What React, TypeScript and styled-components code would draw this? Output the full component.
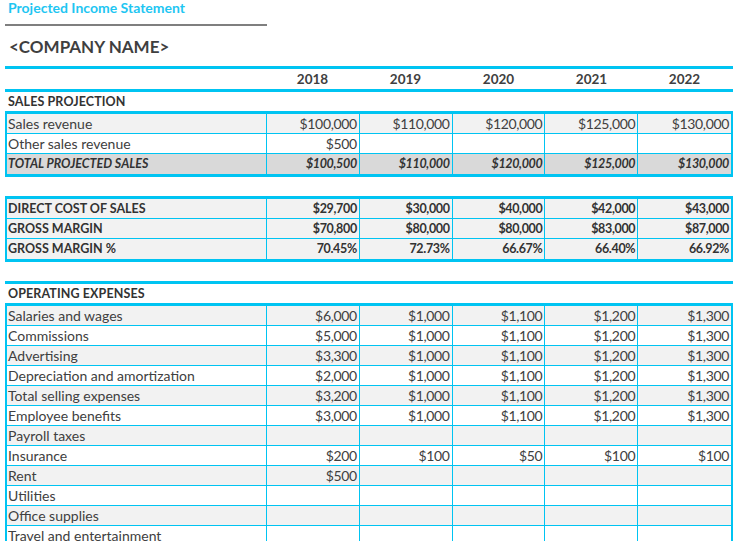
import React from "react";
import styled, { createGlobalStyle, css } from "styled-components";

const CYAN = "#00C4F2";
const TEXT = "#404040";
const FONT = `"Lato", "Open Sans", "Liberation Sans", sans-serif`;

const GlobalStyle = createGlobalStyle`
  html, body { margin: 0; padding: 0; background: #ffffff; }
  body { font-family: ${FONT}; color: ${TEXT}; }
`;

const Page = styled.div`
  width: 728px;
  padding-left: 5px;
  display: flex;
  flex-direction: column;
`;

const Title = styled.div`
  height: 24px;
  padding-left: 3px;
  font-size: 14px;
  font-weight: 700;
  color: #1ec6f2;
  line-height: 16px;
`;

const GrayRule = styled.div`
  width: 262px;
  height: 2px;
  background: #7f7f7f;
`;

const Company = styled.div`
  height: 40px;
  display: flex;
  align-items: center;
  padding-left: 4px;
  font-size: 17px;
  font-weight: 700;
  color: #3f3f3f;
`;

const CyanRule = styled.div`
  height: 3px;
  background: ${CYAN};
`;

const cols = css`
  display: grid;
  grid-template-columns: 261px repeat(5, 1fr);
  padding: 0 2px 0 0;
`;

const YearRow = styled.div`
  ${cols};
  height: 20px;
  align-items: center;
  font-size: 13.5px;
  font-weight: 700;
  color: ${TEXT};
`;

const YearCell = styled.div`
  text-align: center;
`;

const SectionLabel = styled.div`
  height: 19px;
  display: flex;
  align-items: center;
  padding-left: 3px;
  font-size: 12.5px;
  font-weight: 700;
  color: #333333;
  letter-spacing: 0.1px;
`;

const Gap = styled.div`
  height: 19px;
`;

const Table = styled.div`
  border-top: 3px solid ${CYAN};
  border-bottom: 3px solid ${CYAN};
  border-left: 2px solid ${CYAN};
  border-right: 2px solid ${CYAN};
  display: flex;
  flex-direction: column;
`;

type Tone = "light" | "white" | "total";

const Row = styled.div<{ $tone: Tone; $bold?: boolean; $italic?: boolean }>`
  display: grid;
  grid-template-columns: 260px repeat(5, 1fr);
  height: 20px;
  box-sizing: border-box;
  background: ${(p) =>
    p.$tone === "light" ? "#F2F2F2" : p.$tone === "total" ? "#D9D9D9" : "#FFFFFF"};
  font-weight: ${(p) => (p.$bold ? 700 : 400)};
  font-style: ${(p) => (p.$italic ? "italic" : "normal")};
  font-size: ${(p) => (p.$bold ? "12.5px" : "14px")};
  color: ${(p) => (p.$bold ? "#333333" : TEXT)};
  &:not(:last-child) {
    border-bottom: 1px solid ${CYAN};
  }
`;

const Cell = styled.div<{ $align?: "left" | "right" }>`
  display: flex;
  align-items: center;
  justify-content: ${(p) => (p.$align === "right" ? "flex-end" : "flex-start")};
  padding: ${(p) => (p.$align === "right" ? "0 2px 1px 0" : "0 0 1px 1px")};
  letter-spacing: ${(p) => (p.$align === "right" ? "-0.35px" : "0")};
  white-space: nowrap;
  overflow: hidden;
  &:not(:last-child) {
    border-right: 1px solid ${CYAN};
  }
`;

type Line = { label: string; values: string[]; tone: Tone; bold?: boolean; italic?: boolean };

const years = ["2018", "2019", "2020", "2021", "2022"];

const sales: Line[] = [
  { label: "Sales revenue", values: ["$100,000", "$110,000", "$120,000", "$125,000", "$130,000"], tone: "light" },
  { label: "Other sales revenue", values: ["$500", "", "", "", ""], tone: "white" },
  {
    label: "TOTAL PROJECTED SALES",
    values: ["$100,500", "$110,000", "$120,000", "$125,000", "$130,000"],
    tone: "total",
    bold: true,
    italic: true,
  },
];

const margins: Line[] = [
  { label: "DIRECT COST OF SALES", values: ["$29,700", "$30,000", "$40,000", "$42,000", "$43,000"], tone: "light", bold: true },
  { label: "GROSS MARGIN", values: ["$70,800", "$80,000", "$80,000", "$83,000", "$87,000"], tone: "light", bold: true },
  { label: "GROSS MARGIN %", values: ["70.45%", "72.73%", "66.67%", "66.40%", "66.92%"], tone: "light", bold: true },
];

const opexData: [string, string[]][] = [
  ["Salaries and wages", ["$6,000", "$1,000", "$1,100", "$1,200", "$1,300"]],
  ["Commissions", ["$5,000", "$1,000", "$1,100", "$1,200", "$1,300"]],
  ["Advertising", ["$3,300", "$1,000", "$1,100", "$1,200", "$1,300"]],
  ["Depreciation and amortization", ["$2,000", "$1,000", "$1,100", "$1,200", "$1,300"]],
  ["Total selling expenses", ["$3,200", "$1,000", "$1,100", "$1,200", "$1,300"]],
  ["Employee benefits", ["$3,000", "$1,000", "$1,100", "$1,200", "$1,300"]],
  ["Payroll taxes", ["", "", "", "", ""]],
  ["Insurance", ["$200", "$100", "$50", "$100", "$100"]],
  ["Rent", ["$500", "", "", "", ""]],
  ["Utilities", ["", "", "", "", ""]],
  ["Office supplies", ["", "", "", "", ""]],
  ["Travel and entertainment", ["", "", "", "", ""]],
];

const opex: Line[] = opexData.map(([label, values], i) => ({
  label,
  values,
  tone: i % 2 === 0 ? "light" : "white",
}));

function DataTable({ lines }: { lines: Line[] }) {
  return (
    <Table>
      {lines.map((l) => (
        <Row key={l.label} $tone={l.tone} $bold={l.bold} $italic={l.italic}>
          <Cell $align="left">{l.label}</Cell>
          {l.values.map((v, i) => (
            <Cell key={i} $align="right">
              {v}
            </Cell>
          ))}
        </Row>
      ))}
    </Table>
  );
}

export default function App() {
  return (
    <>
      <GlobalStyle />
      <Page>
        <Title>Projected Income Statement</Title>
        <GrayRule />
        <Company>&lt;COMPANY NAME&gt;</Company>
        <CyanRule />
        <YearRow>
          <div />
          {years.map((y) => (
            <YearCell key={y}>{y}</YearCell>
          ))}
        </YearRow>
        <CyanRule />
        <SectionLabel>SALES PROJECTION</SectionLabel>
        <DataTable lines={sales} />
        <Gap />
        <DataTable lines={margins} />
        <Gap />
        <CyanRule />
        <SectionLabel>OPERATING EXPENSES</SectionLabel>
        <DataTable lines={opex} />
      </Page>
    </>
  );
}
